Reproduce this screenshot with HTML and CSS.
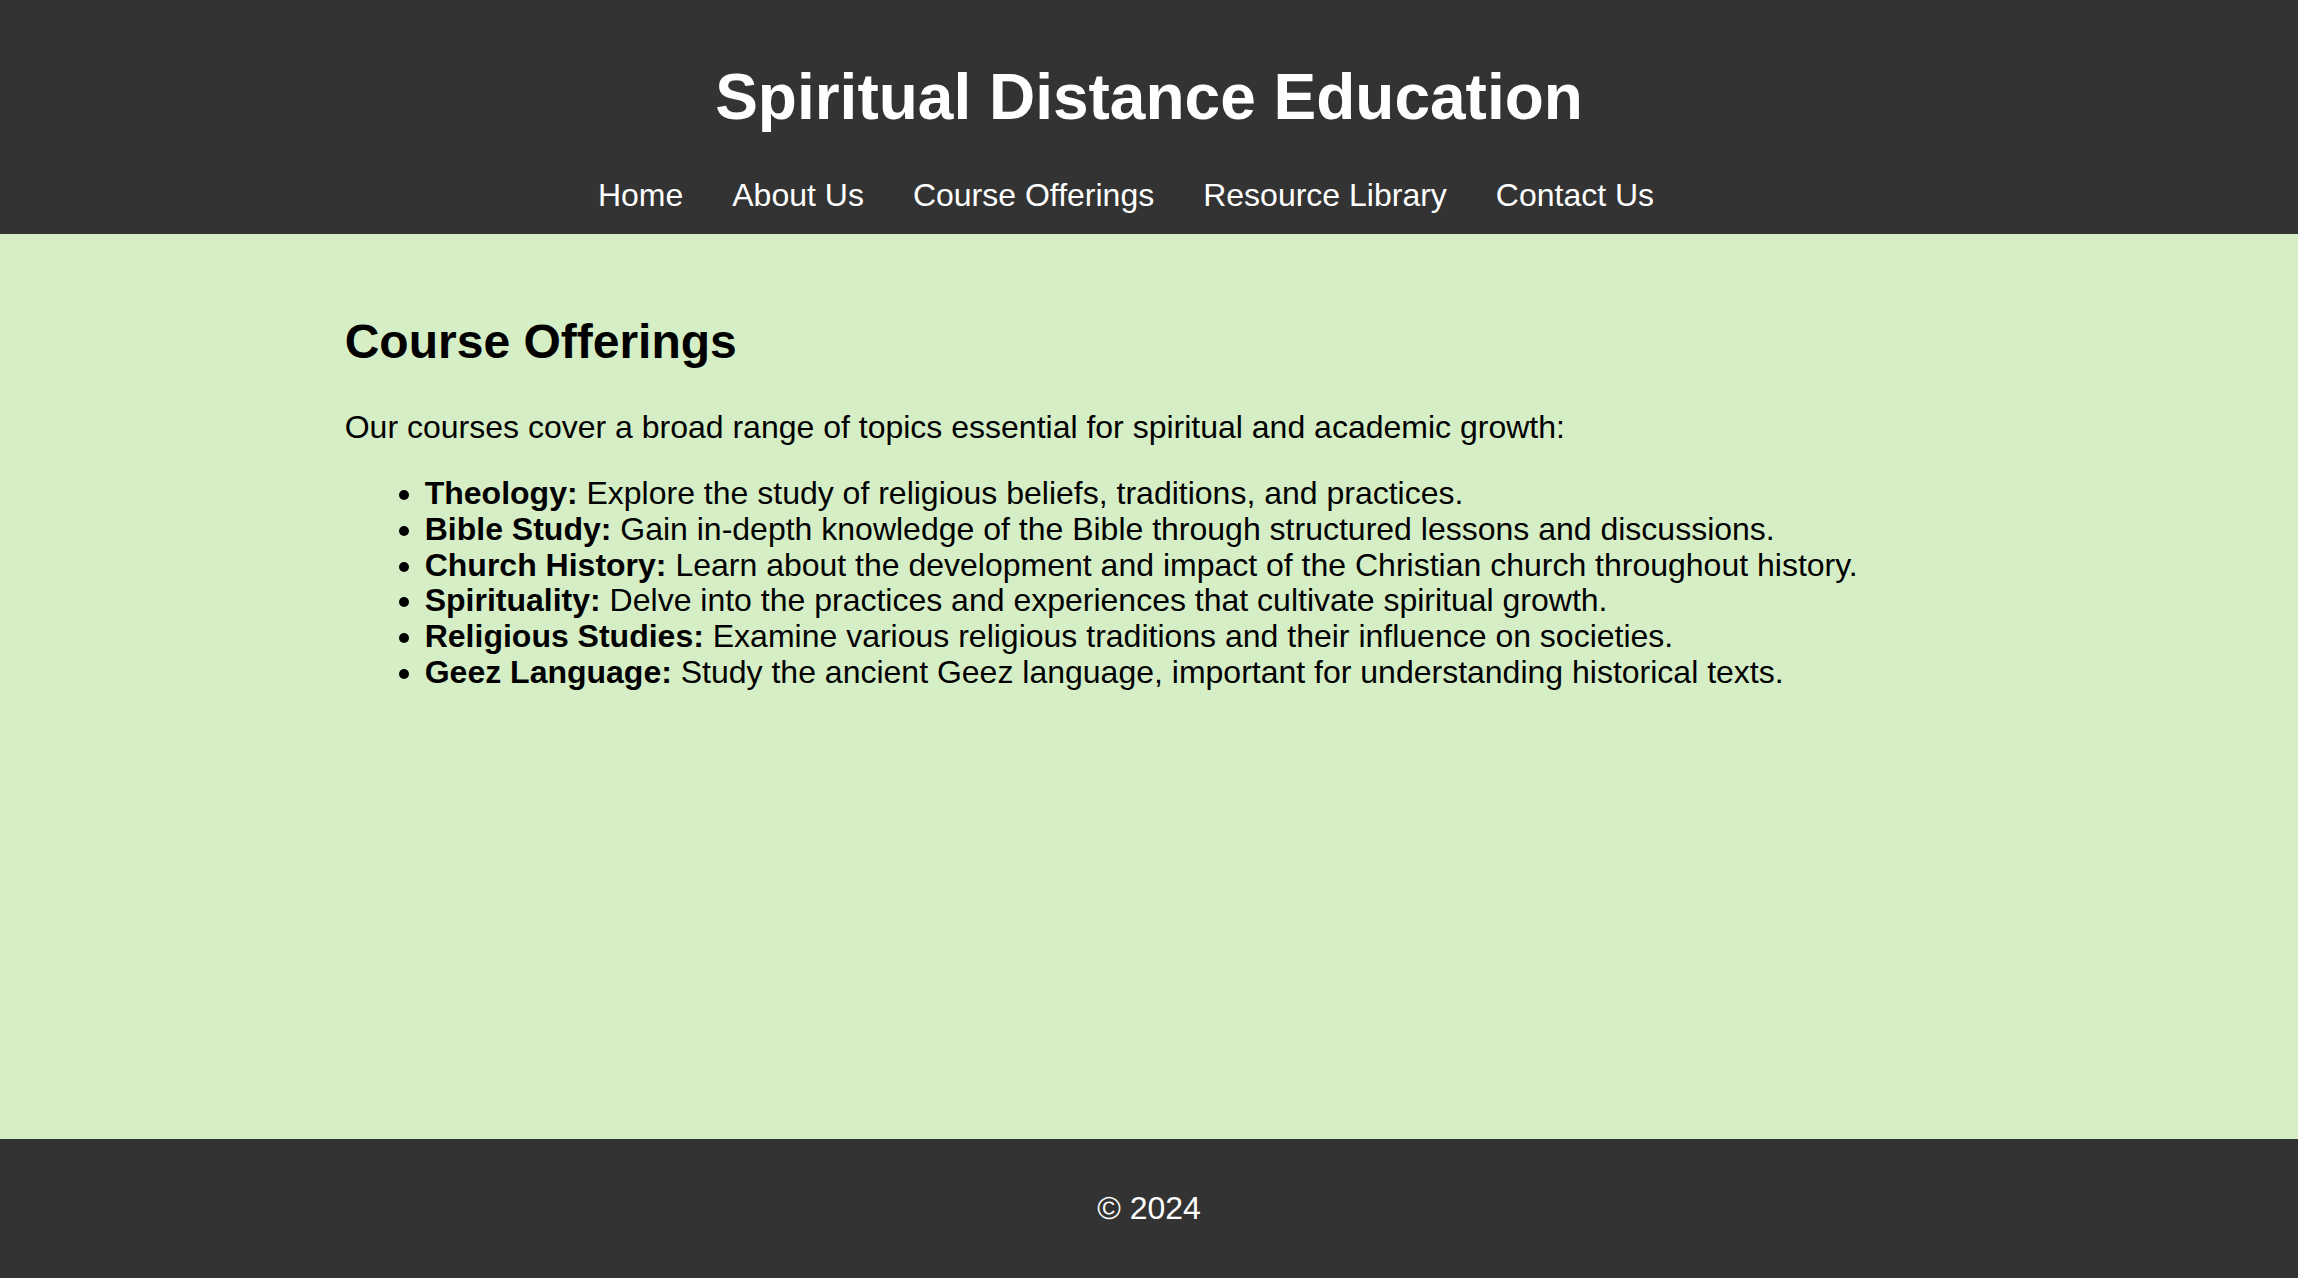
FILE: index.html
```html
<!DOCTYPE html>
<html lang="en">
<head>
<meta charset="utf-8">
<title>Spiritual Distance Education</title>
<link rel="stylesheet" href="styles.css">
</head>
<body>
<header class="site-header">
  <h1 class="site-title">Spiritual Distance Education</h1>
  <nav>
    <ul class="nav-list">
      <li><a href="#">Home</a></li>
      <li><a href="#">About Us</a></li>
      <li><a href="#">Course Offerings</a></li>
      <li><a href="#">Resource Library</a></li>
      <li><a href="#">Contact Us</a></li>
    </ul>
  </nav>
</header>
<main class="site-main">
  <section class="content">
    <h2 class="section-title">Course Offerings</h2>
    <p class="intro">Our courses cover a broad range of topics essential for spiritual and academic growth:</p>
    <ul class="course-list">
      <li><strong>Theology:</strong> Explore the study of religious beliefs, traditions, and practices.</li>
      <li><strong>Bible Study:</strong> Gain in-depth knowledge of the Bible through structured lessons and discussions.</li>
      <li><strong>Church History:</strong> Learn about the development and impact of the Christian church throughout history.</li>
      <li><strong>Spirituality:</strong> Delve into the practices and experiences that cultivate spiritual growth.</li>
      <li><strong>Religious Studies:</strong> Examine various religious traditions and their influence on societies.</li>
      <li><strong>Geez Language:</strong> Study the ancient Geez language, important for understanding historical texts.</li>
    </ul>
  </section>
</main>
<footer class="site-footer">
  <p class="copyright">&copy; 2024</p>
</footer>
</body>
</html>
```

FILE: styles.css
```css
html, body {
  margin: 0;
  padding: 0;
}

body {
  font-family: "Liberation Sans", Arial, sans-serif;
  font-size: 32px;
  line-height: normal;
  color: #000;
  background: #d5eec5;
  min-height: 100vh;
  display: flex;
  flex-direction: column;
}

.site-header {
  background: #333333;
  color: #fff;
  padding: 20px 0;
  text-align: center;
}

.site-title {
  font-size: 64px;
  font-weight: bold;
  margin: 40px 0 43px;
}

.nav-list {
  list-style: none;
  margin: 0;
  padding: 0 46px 0 0;
  display: flex;
  justify-content: center;
  gap: 49px;
}

.nav-list a {
  color: #fff;
  text-decoration: none;
}

.site-main {
  flex: 1;
  background: #d5eec5;
  padding: 40px 0;
}

.content {
  width: 70%;
  margin: 0 auto;
}

.section-title {
  font-size: 48px;
  font-weight: bold;
  margin: 40px 0;
}

.intro {
  margin: 32px 0 30px;
}

.course-list {
  margin: 30px 0 32px;
  padding-left: 80px;
  line-height: 35.8px;
}

.site-footer {
  background: #333333;
  color: #fff;
  text-align: center;
  padding: 51px 0;
}

.copyright {
  margin: 0;
}
```
